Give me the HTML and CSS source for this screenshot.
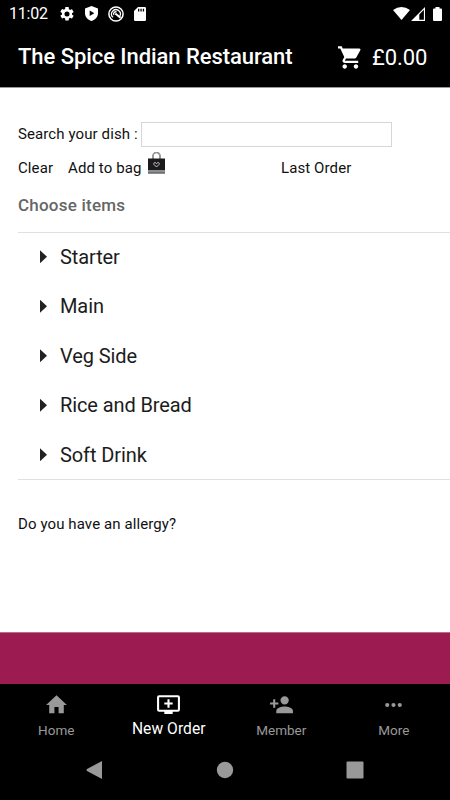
FILE: index.html
```html
<!DOCTYPE html>
<html lang="en">
<head>
<meta charset="utf-8">
<title>The Spice Indian Restaurant</title>
<link rel="stylesheet" href="styles.css">
</head>
<body>
<div class="screen">
  <header class="top">
    <div class="status">
      <span class="clock">11:02</span>
      <svg class="ico gear" viewBox="2 2 20 20"><path fill-rule="evenodd" d="M19.14 12.94c.04-.3.06-.61.06-.94s-.02-.64-.07-.94l2.03-1.58a.49.49 0 0 0 .12-.61l-1.92-3.32a.49.49 0 0 0-.59-.22l-2.39.96c-.5-.38-1.03-.7-1.62-.94l-.36-2.54A.48.48 0 0 0 13.92 2h-3.84c-.24 0-.43.17-.47.41l-.36 2.54c-.59.24-1.13.57-1.62.94l-2.39-.96a.48.48 0 0 0-.59.22L2.74 8.47a.48.48 0 0 0 .12.61l2.03 1.58c-.05.3-.09.63-.09.94s.02.64.07.94l-2.03 1.58a.49.49 0 0 0-.12.61l1.92 3.32c.12.22.37.29.59.22l2.39-.96c.5.38 1.03.7 1.62.94l.36 2.54c.05.24.24.41.48.41h3.84c.24 0 .44-.17.47-.41l.36-2.54c.59-.24 1.13-.56 1.62-.94l2.39.96c.22.08.47 0 .59-.22l1.92-3.32a.49.49 0 0 0-.12-.61zM12 15.6A3.6 3.6 0 1 1 12 8.4a3.6 3.6 0 0 1 0 7.2z"/></svg>
      <svg class="ico shield" viewBox="0 0 13 15"><path fill-rule="evenodd" d="M6.5 0 13 2.4v4.8c0 3.600-2.700 6.700-6.500 7.800C2.700 13.900 0 10.800 0 7.200V2.400zM4.700 4.500v5.600L9.300 7.300z"/></svg>
      <svg class="ico radar" viewBox="0 0 16 16"><g fill="none" stroke="#fff"><circle cx="8" cy="8" r="7.100" stroke-width="1.500"/><path stroke-width="1.300" d="M5 11.300A4.400 4.400 0 1 1 11.800 10.200M5.800 9A2.300 2.300 0 0 1 8.600 5.900"/><path stroke-width="2" d="m7.300 7.500 5.200 4.300"/></g></svg>
      <svg class="ico card" viewBox="0 0 12 14"><path fill-rule="evenodd" d="M4 0h6.700Q12 0 12 1.300v11.400Q12 14 10.700 14H1.300Q0 14 0 12.700V4zM4 1.800v2.700h1.300V1.800zm2.400 0v2.700h1.300V1.800zm2.400 0v2.700h1.300V1.800z"/></svg>
      <svg class="ico wifi" viewBox="0 0 17 13"><path d="M8.500 13 0 3Q8.500-3 17 3z"/></svg>
      <svg class="ico signal" viewBox="0 0 14 14"><path fill-rule="evenodd" d="M14 0v14H0zM12.900 2.800 8.300 7.400v5.400h4.600z"/></svg>
      <svg class="ico battery" viewBox="0 0 9 14"><path d="M2.500 0h4v1.400H8q1 0 1 1V13q0 1-1 1H1q-1 0-1-1V2.400q0-1 1-1h1.500z"/></svg>
    </div>
    <div class="bar">
      <h1>The Spice Indian Restaurant</h1>
      <svg class="cart" viewBox="1 2 20.500 20"><path d="M7 18c-1.100 0-1.990.9-1.990 2S5.900 22 7 22s2-.9 2-2-.9-2-2-2zM1 2v2h2l3.600 7.590-1.350 2.450C4.520 15.370 5.480 17 7 17h12v-2H7.420c-.14 0-.25-.11-.25-.25l.03-.12.900-1.630h7.450c.75 0 1.410-.41 1.750-1.030l3.580-6.490A1 1 0 0 0 20 4H5.210l-.94-2zM17 18c-1.100 0-1.990.9-1.990 2s.89 2 1.990 2 2-.9 2-2-.9-2-2-2z"/></svg>
      <span class="total">£0.00</span>
    </div>
  </header>
  <main>
    <label class="search"><span>Search your dish :</span><input type="text"></label>
    <div class="actions">
      <span class="clear">Clear</span>
      <span class="add">Add to bag</span>
      <svg class="bag" viewBox="0 0 17 22"><path d="M5 7V4a3.500 3.500 0 0 1 7 0v3" fill="none" stroke="#777" stroke-width="1.700"/><path d="M5 7V4a3.500 3.500 0 0 1 7 0v3" fill="none" stroke="#ccc" stroke-width=".5"/><path fill="#1c1a1c" d="M0 6.500h17V18H0z"/><path fill="#8b908d" d="M0 18h17v2.500H0z"/><path fill="#1c1a1c" d="M0 20.500h17v1H0z"/><path d="M8.500 15 5.900 12.400c-.8-2 1.700-2.500 2.600-.8.900-1.700 3.400-1.200 2.600.8z" fill="none" stroke="#ddd" stroke-width=".9"/></svg>
      <span class="last">Last Order</span>
    </div>
    <h2>Choose items</h2>
    <ul class="menu">
      <li><i></i><span>Starter</span></li>
      <li><i></i><span>Main</span></li>
      <li><i></i><span>Veg Side</span></li>
      <li><i></i><span>Rice and Bread</span></li>
      <li><i></i><span>Soft Drink</span></li>
    </ul>
    <p class="allergy">Do you have an allergy?</p>
  </main>
  <div class="banner"></div>
  <nav class="tabs">
    <a><svg viewBox="0 0 24 24"><path d="M10 20.500v-6h4v6h5v-8h3L12 3 2 12.500h3v8z"/></svg><span>Home</span></a>
    <a class="active"><svg viewBox="0 0 24 24"><path fill-rule="evenodd" d="M21 3H3a2 2 0 0 0-2 2v12a2 2 0 0 0 2 2h5v2h8v-2h5a2 2 0 0 0 2-2V5a2 2 0 0 0-2-2zm0 14H3V5h18zM13 7h-2v3H8v2h3v3h2v-3h3v-2h-3z"/></svg><span>New Order</span></a>
    <a><svg viewBox="0 0 24 24"><path d="M15 12a4 4 0 1 0 0-8 4 4 0 0 0 0 8zm-9-2V7H4v3H1v2h3v3h2v-3h3v-2zm9 4c-2.670 0-8 1.340-8 4v2.500h16V18c0-2.660-5.330-4-8-4z"/></svg><span>Member</span></a>
    <a><svg viewBox="0 0 24 24"><path d="M6 10.500a2 2 0 1 0 0 4 2 2 0 0 0 0-4zm6 0a2 2 0 1 0 0 4 2 2 0 0 0 0-4zm6 0a2 2 0 1 0 0 4 2 2 0 0 0 0-4z"/></svg><span>More</span></a>
  </nav>
  <div class="system">
    <svg viewBox="0 0 18 18"><path d="M16 0v18L1 10Q0 9 1 8z"/></svg>
    <svg viewBox="0 0 18 18"><circle cx="9" cy="9" r="8.200"/></svg>
    <svg viewBox="0 0 18 18"><rect x=".5" y=".5" width="17" height="17" rx="1"/></svg>
  </div>
</div>
</body>
</html>
```
FILE: styles.css
```css
* { box-sizing: border-box; }
body { margin: 0; background: #fff; font-family: Roboto, sans-serif; color: #1c1c1c; }
h1, h2, p, ul { margin: 0; padding: 0; font-weight: 400; }
svg { display: block; flex: none; }
span, h1, h2, p { white-space: nowrap; }
.screen { width: 450px; height: 800px; display: flex; flex-direction: column; overflow: hidden; }

.top { height: 88px; background: #000; color: #fff; border-bottom: 1px solid #999; flex: none; }
.status { height: 27px; display: flex; align-items: center; padding: 0 8px 0 9px; }
.ico { fill: #fff; }
.clock { width: 51px; font-size: 16px; letter-spacing: -0.2px; line-height: 27px; }
.gear { width: 14px; height: 14px; }
.shield { width: 13px; height: 15px; margin-left: 11px; }
.radar { width: 16px; height: 16px; margin-left: 10px; }
.card { width: 12px; height: 14px; margin-left: 10px; }
.wifi { width: 17px; height: 13px; margin-left: auto; }
.signal { width: 14px; height: 14px; margin-left: 1px; }
.battery { width: 9px; height: 14px; margin-left: 8px; }
.bar { height: 60px; display: flex; align-items: center; padding-left: 18px; }
h1 { width: 320px; font-size: 22px; font-weight: 500; line-height: 60px; letter-spacing: -0.06px; }
.cart { width: 23px; height: 23px; fill: #fff; }
.total { margin-left: 11px; font-size: 22px; letter-spacing: -0.1px; }

main { height: 544px; padding: 34px 0 0 18px; flex: none; font-size: 15px; letter-spacing: 0.1px; }
.search { height: 25px; display: flex; align-items: center; color: #111; }
.search span { width: 123px; padding-bottom: 2px; }
input { width: 251px; height: 25px; border: 1px solid #d6d6d6; padding: 0 6px; outline: 0; background: #fff; }
.actions { height: 42px; display: flex; align-items: center; color: #111; }
.clear { width: 50px; }
.add { width: 80px; }
.bag { width: 17px; height: 22px; margin-top: -11px; }
.last { margin-left: 116px; }
h2 { height: 43px; line-height: 32px; font-size: 17px; color: #666; font-weight: 500; letter-spacing: 0.22px; }
.menu { list-style: none; border: solid #e0e0e0; border-width: 1px 0; height: 248px; display: flex; flex-direction: column; }
li { height: 49.500px; display: flex; align-items: center; padding: 0 0 2px 22px; font-size: 20px; letter-spacing: -0.1px; flex: none; }
li i { width: 7px; height: 13px; margin-right: 13px; background: #222; clip-path: polygon(0 0, 100% 50%, 0 100%); }
.allergy { margin-top: 34px; line-height: 20px; color: #111; }

.banner { height: 52px; background: #9c1c51; border-top: 1px solid #b56d8b; flex: none; }
.tabs { height: 64px; background: #000; display: flex; flex: none; }
.tabs a { flex: 1; display: flex; flex-direction: column; align-items: center; padding-top: 8px; color: #999; font-size: 13.500px; }
.tabs svg { width: 25px; height: 25px; fill: currentColor; }
.tabs span { line-height: 26px; }
.tabs .active { color: #fff; font-size: 15.600px; }
.tabs .active span { line-height: 25px; letter-spacing: 0.05px; }
.system { flex: 1; background: #000; display: flex; justify-content: space-between; padding: 13px 86px 0 86px; }
.system svg { width: 18px; height: 18px; fill: #999; }
```
